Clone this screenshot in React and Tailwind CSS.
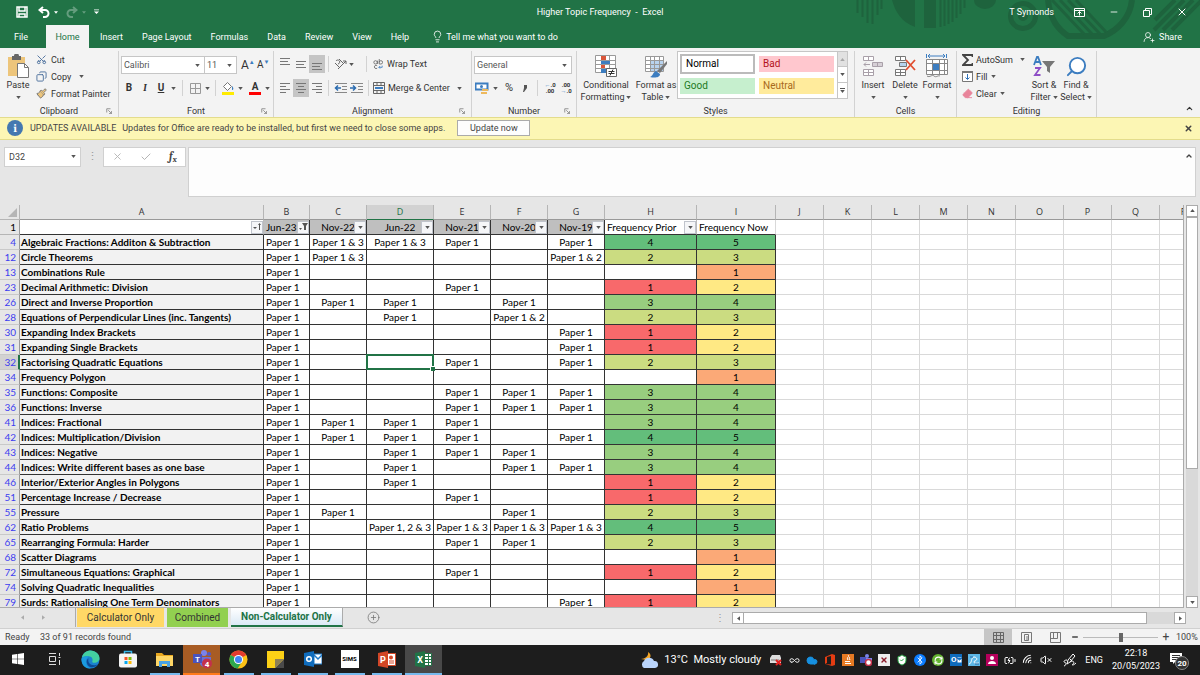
import React, {useState} from 'react';
import clsx from 'clsx';
import {
  BatteryCharging,
  Bluetooth,
  Check,
  ChevronUp,
  CirclePlus,
  Cloud,
  Copy,
  Eraser,
  Infinity as InfinityIcon,
  Lightbulb,
  Minus,
  Paintbrush,
  RefreshCw,
  Scissors,
  Search,
  ShieldCheck,
  UserRoundPlus,
  VolumeX,
  Wifi,
  X,
} from 'lucide-react';

// row number, topic, Nov-22, Jun-22, Nov-21, Nov-20, Nov-19, frequency prior, frequency now
const ROWS = [
  [4, 'Algebraic Fractions: Additon & Subtraction', '1 & 3', '1 & 3', '1', '', '1', 4, 5],
  [12, 'Circle Theorems', '1 & 3', '', '', '', '1 & 2', 2, 3],
  [13, 'Combinations Rule', '', '', '', '', '', null, 1],
  [23, 'Decimal Arithmetic: Division', '', '', '1', '', '', 1, 2],
  [26, 'Direct and Inverse Proportion', '1', '1', '', '1', '', 3, 4],
  [28, 'Equations of Perpendicular Lines (inc. Tangents)', '', '1', '', '1 & 2', '', 2, 3],
  [30, 'Expanding Index Brackets', '', '', '', '', '1', 1, 2],
  [31, 'Expanding Single Brackets', '', '', '', '', '1', 1, 2],
  [32, 'Factorising Quadratic Equations', '', '', '1', '', '1', 2, 3],
  [34, 'Frequency Polygon', '', '', '', '', '', null, 1],
  [35, 'Functions: Composite', '', '', '1', '1', '1', 3, 4],
  [36, 'Functions: Inverse', '', '', '1', '1', '1', 3, 4],
  [41, 'Indices: Fractional', '1', '1', '1', '', '', 3, 4],
  [42, 'Indices: Multiplication/Division', '1', '1', '1', '', '1', 4, 5],
  [43, 'Indices: Negative', '', '1', '1', '1', '', 3, 4],
  [44, 'Indices: Write different bases as one base', '', '1', '', '1', '1', 3, 4],
  [46, 'Interior/Exterior Angles in Polygons', '', '1', '', '', '', 1, 2],
  [51, 'Percentage Increase / Decrease', '', '', '1', '', '', 1, 2],
  [55, 'Pressure', '1', '', '', '1', '', 2, 3],
  [62, 'Ratio Problems', '', '1, 2 & 3', '1 & 3', '1 & 3', '1 & 3', 4, 5],
  [65, 'Rearranging Formula: Harder', '', '', '1', '1', '', 2, 3],
  [68, 'Scatter Diagrams', '', '', '', '', '', null, 1],
  [72, 'Simultaneous Equations: Graphical', '', '', '1', '', '', 1, 2],
  [74, 'Solving Quadratic Inequalities', '', '', '', '', '', null, 1],
  [79, 'Surds: Rationalising One Term Denominators', '', '', '', '', '1', 1, 2],
];

const PRIOR_COLORS = {1: 'bg-[#f8696b]', 2: 'bg-[#cbdc81]', 3: 'bg-[#98ce7f]', 4: 'bg-[#63be7b]'};
const NOW_COLORS = {
  1: 'bg-[#fba977]',
  2: 'bg-[#ffe984]',
  3: 'bg-[#cbdc81]',
  4: 'bg-[#98ce7f]',
  5: 'bg-[#63be7b]',
};

const EMPTY_COLUMNS = ['J', 'K', 'L', 'M', 'N', 'O', 'P', 'Q', 'R'];
const DATES = ['Jun-23', 'Nov-22', 'Jun-22', 'Nov-21', 'Nov-20', 'Nov-19'];

function Caret({className}) {
  return (
    <svg viewBox="0 0 6 4" className={clsx('h-[3px] w-[5px] shrink-0', className)}>
      <path d="M0 0h6L3 4z" fill="#555" />
    </svg>
  );
}

function Launcher() {
  return (
    <svg viewBox="0 0 8 8" className="h-[6px] w-[6px]" fill="none" stroke="#777">
      <path d="M1 6V1h5M3 3l4 4M7.500 4v3.500H4" />
    </svg>
  );
}

function Group({label, launcher, className, children}) {
  return (
    <section className={clsx('flex shrink-0 flex-col border-r border-[#d2d2d2]', className)}>
      <div className="flex h-[54px] items-start">{children}</div>
      <div className="flex h-3 items-center px-1">
        <span className="w-2" />
        <span className="grow text-center">{label}</span>
        <button aria-label={`${label} settings`} className="w-2">
          {launcher && <Launcher />}
        </button>
      </div>
    </section>
  );
}

function IconButton({label, active, children, className}) {
  return (
    <button
      aria-label={label}
      className={clsx('flex h-[18px] w-4 shrink-0 items-center justify-center', active && 'bg-[#c5c5c5]', className)}
    >
      {children}
    </button>
  );
}

function Divider() {
  return <span className="h-4 w-px shrink-0 bg-[#d2d2d2]" />;
}

function Lines({widths, align = 'start', offset = 3}) {
  const x = {start: () => 1, center: (w) => 6 - w / 2, end: (w) => 11 - w};

  return (
    <svg viewBox="0 0 12 14" className="h-[14px] w-3" stroke="#777">
      {widths.map((w, i) => (
        <path key={i} d={`M${x[align](w)} ${offset + i * 3 - 0.5}h${w}`} />
      ))}
    </svg>
  );
}

function IndentIcon({flip}) {
  return (
    <svg viewBox="0 0 14 12" className="h-3 w-[14px]" fill="none" stroke="#888">
      <path d="M1 1.500h12M8 4.500h5M8 7.500h5M1 10.500h12" />
      <path d={flip ? 'M0 6h5M3 3.500L5.500 6 3 8.500' : 'M7 6H2M4 3.500L1.500 6 4 8.500'} stroke="#2b6cb0" strokeWidth="1.500" />
    </svg>
  );
}

function SelectBox({label, value, className}) {
  return (
    <div className={clsx('flex h-[18px] items-center border border-[#c6c6c6] bg-white pr-1', className)}>
      <select
        aria-label={label}
        className="w-0 grow appearance-none bg-transparent pl-[2px] text-[#555] outline-none"
        defaultValue={value}
      >
        <option>{value}</option>
      </select>
      <Caret />
    </div>
  );
}

function BigButton({icon, lines, caretBelow, className}) {
  return (
    <button className={clsx('flex shrink-0 flex-col items-center', className)}>
      <span className="flex h-[26px] items-center">{icon}</span>
      <span className="h-3 whitespace-nowrap">{lines[0]}</span>
      <span className="flex h-3 items-center gap-[2px] whitespace-nowrap">
        {lines[1]}
        <Caret className={caretBelow && 'mt-[1px]'} />
      </span>
    </button>
  );
}

function CellsIcon({kind}) {
  const c = kind === 'insert' ? '#a9a0a9' : '#777';

  return (
    <svg viewBox="0 0 22 22" className="h-[22px] w-[22px]" fill="#fff" stroke={c}>
      <path d="M1.500 1.500h10v4h-10zM6.500 1.500v4M1.500 14.500h10v6h-10zM6.500 14.500v6M1.500 17.500h10" />
      {kind === 'insert' ? (
        <>
          <path d="M10.500 7.500h10v4h-10zM15.500 7.500v4" fill="#d6d0d6" />
          <path d="M8 9.500H2M4 7.500l-2 2 2 2" fill="none" />
        </>
      ) : (
        <>
          <path d="M5.500 7.500h7v4h-7z" fill="#b5d3ee" />
          <path d="M12 5l9 10M21 5l-9 10" stroke="#e04e2f" strokeWidth="1.800" fill="none" />
        </>
      )}
    </svg>
  );
}

function FormatIcon() {
  return (
    <svg viewBox="0 0 22 24" className="h-6 w-[22px]" fill="#fff" stroke="#888">
      <path d="M.5 5.500h21v15H.5zM6.500 5.500v15M13.500 5.500v15M18.500 5.500v15M.5 9.500h21M.5 16.500h21" />
      <path d="M6.500 9.500h7v7h-7z" fill="#3c7dc0" />
      <path d="M2 2h17M4 0L2 2l2 2M17 0l2 2-2 2M.5 0v4M20.500 0v4" stroke="#3c7dc0" fill="none" />
      <path d="M1 22c3 2 5-2 7 0s4-1 6 0" fill="none" />
    </svg>
  );
}

function ConditionalIcon() {
  return (
    <svg viewBox="0 0 22 22" className="h-[22px] w-[22px]" fill="#fff" stroke="#999">
      <path d="M.5.500h20v17H.5zM6.500.500v17M14.500.500v17M.5 5.500h20M.5 9.500h20M.5 13.500h20" />
      <path d="M6 1h5v4H6zM6 10h4v3H6z" fill="#d9563a" stroke="none" />
      <path d="M6 6h9v3H6zM6 14h5v4H6z" fill="#3c7dc0" stroke="none" />
      <path d="M11.500 13.500h10v8h-10z" stroke="#666" />
      <path d="M13.500 16.500h6M13.500 18.500h6M18 14.500l-3 6" stroke="#333" />
    </svg>
  );
}

function TableIcon() {
  return (
    <svg viewBox="0 0 23 23" className="h-[23px] w-[23px]" fill="#fff" stroke="#999">
      <path d="M.5 1.500h18v15H.5z" />
      <path d="M5 5h13v11H5z" fill="#b8d3ee" stroke="none" />
      <path d="M.5 5.500h18M.5 9.500h18M.5 13.500h18M5.500 1.500v15M9.500 1.500v15M14.500 1.500v15" />
      <path d="M22 6v3l-7 9-3-2z" fill="#777" stroke="none" />
      <path d="M11 16l4 3c0 4-6 4-10 3 3-1 3-5 6-6z" fill="#3c7dc0" stroke="none" />
    </svg>
  );
}

function PasteIcon() {
  return (
    <svg viewBox="0 0 22 24" className="h-6 w-[22px]">
      <path d="M1 3h17v19H1z" fill="#edc57b" />
      <path d="M5 2h2a2.500 2.500 0 0 1 5 0h2v4H5z" fill="#666" />
      <path d="M10.500 9.500h7l4 4v10h-11z" fill="#fff" stroke="#777" />
      <path d="M17.500 9.500v4h4" fill="none" stroke="#777" />
    </svg>
  );
}

function TitleBar() {
  return (
    <div className="flex h-6 items-center">
      <div className="flex w-1/3 items-center pl-4 text-white">
        <button aria-label="Save" className="mr-[10px]">
          <svg viewBox="0 0 12 12" className="h-3 w-3" fill="none" stroke="#fff" strokeWidth="1.500">
            <path d="M1 1h10v10H1zM3 1v4h6V1M3 11V8h6v3" />
          </svg>
        </button>
        <button aria-label="Undo" className="mr-1">
          <svg viewBox="0 0 12 12" className="h-3 w-3" fill="none" stroke="#fff" strokeWidth="2">
            <path d="M5 1L1.500 4 5 7M2 4h5a3 3 0 0 1 0 7H5" />
          </svg>
        </button>
        <svg viewBox="0 0 6 4" className="mr-2 h-[3px] w-[4px]">
          <path d="M0 0h6L3 4z" fill="#fff" />
        </svg>
        <button aria-label="Redo" className="mr-1 opacity-30">
          <svg viewBox="0 0 12 12" className="h-3 w-3" fill="none" stroke="#fff" strokeWidth="2">
            <path d="M7 1l3.500 3L7 7M10 4H5a3 3 0 0 0 0 7h2" />
          </svg>
        </button>
        <svg viewBox="0 0 6 4" className="mr-2 h-[3px] w-[4px] opacity-30">
          <path d="M0 0h6L3 4z" fill="#fff" />
        </svg>
        <button aria-label="Customise toolbar">
          <svg viewBox="0 0 6 6" className="h-[6px] w-[5px]" fill="#fff">
            <path d="M0 0h6v1H0zM0 2.500h6l-3 3z" />
          </svg>
        </button>
      </div>
      <h1 className="w-1/3 text-center whitespace-pre text-white">Higher Topic Frequency  -  Excel</h1>
      <div className="flex w-1/3 items-center justify-end gap-6 pr-3 text-white">
        <span className="-mr-1">T Symonds</span>
        <button aria-label="Ribbon display options">
          <svg viewBox="0 0 11 9" className="h-[9px] w-[11px]" fill="none" stroke="#fff">
            <path d="M.5.500h10v8H.5zM.5 2.500h10M5.500 7.500v-4M3.500 5.500l2-2 2 2" />
          </svg>
        </button>
        <button aria-label="Minimise">
          <Minus size={10} />
        </button>
        <button aria-label="Restore">
          <svg viewBox="0 0 9 9" className="h-[9px] w-[9px]" fill="none" stroke="#fff">
            <path d="M.5 2.500h6v6h-6zM2.500 2.500v-2h6v6h-2" />
          </svg>
        </button>
        <button aria-label="Close">
          <X size={12} strokeWidth={2} />
        </button>
      </div>
    </div>
  );
}

// Circuit-like artwork behind the right side of the title bar
function HeaderArt() {
  return (
    <svg viewBox="0 0 350 48" className="absolute top-0 right-0 h-12 w-[350px]" fill="none" stroke="#1e633d">
      <path d="M7.500 0v13M12.500 0v17M17.500 0v23M22.500 0v24M27.500 0v15M31.500 0v9" strokeWidth="2" />
      <path d="M42 0c3 11 9 22 23 27V0zM74 0h12v28H74z" fill="#1e633d" stroke="none" />
      <path d="M90.500 0v27M94.500 0v26M98.500 0v24M102.500 0v22M106.500 0v18M110.500 0v14M114.500 0v8" strokeWidth="2" />
      <path d="M124 0a11 9 0 0 0 22 0z" fill="#1e633d" stroke="none" />
      <circle cx="173" cy="16" r="12.500" strokeWidth="5" />
      <circle cx="173" cy="16" r="5" fill="#1e633d" stroke="none" />
      <path d="M198 0c2 20 10 29 20 36h36c14-6 26-18 28-36" strokeWidth="6" />
      <path d="M202 0l32 34M210 0l32 34M218 0l32 34M226 0l30 32" strokeWidth="3" />
      <path d="M334 0l-30 30M343 0l-30 30M352 0l-30 30M325 0l-20 20" strokeWidth="4" />
    </svg>
  );
}

const TABS = ['Insert', 'Page Layout', 'Formulas', 'Data', 'Review', 'View', 'Help'];

function Header() {
  return (
    <header className="relative bg-[#217346] text-white">
      <HeaderArt />
      <div className="relative">
        <TitleBar />
        <nav className="flex h-6 items-stretch pt-[1px]">
          <button className="w-[46px] pr-1">File</button>
          <button className="w-[43px] bg-[#f3f3f3] text-[#217346]">Home</button>
          <div className="flex gap-[19px] pl-[11px]">
            {TABS.map((tab) => (
              <button key={tab}>{tab}</button>
            ))}
          </div>
          <button className="flex items-center gap-[2px] pl-[22px]">
            <Lightbulb size={13} strokeWidth={1.5} />
            Tell me what you want to do
          </button>
          <button className="ml-auto flex items-center gap-1 pr-[18px]">
            <UserRoundPlus size={12} strokeWidth={1.5} />
            Share
          </button>
        </nav>
      </div>
    </header>
  );
}

function Ribbon() {
  return (
    <div className="flex h-[69px] bg-[#f3f3f3] pt-[3px] text-[#333]">
      <Group label="Clipboard" launcher className="w-[119px]">
        <BigButton icon={<PasteIcon />} lines={['Paste']} caretBelow className="w-9 pt-[2px]" />
        <div className="flex flex-col">
          <button className="flex h-[17px] items-center gap-1">
            <Scissors size={11} strokeWidth={2} className="-rotate-90 text-[#4a6f9c]" />
            Cut
          </button>
          <button className="flex h-[17px] items-center gap-1">
            <Copy size={11} strokeWidth={2} className="-scale-x-100 text-[#4a6f9c]" />
            Copy
            <Caret className="ml-1" />
          </button>
          <button className="flex h-[17px] items-center gap-1 whitespace-nowrap">
            <Paintbrush size={11} className="fill-[#edc57b] text-[#777]" />
            Format Painter
          </button>
        </div>
      </Group>

      <Group label="Font" launcher className="w-[155px]">
        <div className="flex flex-col gap-[5px] pt-[5px] pl-[2px]">
          <div className="flex items-center">
            <SelectBox label="Font" value="Calibri" className="w-[84px]" />
            <SelectBox label="Font size" value="11" className="w-8 border-l-0" />
            <button aria-label="Increase font size" className="ml-1 flex w-4 text-xs leading-3">
              A<span className="text-[6px] leading-[6px] text-[#3c7dc0]">▲</span>
            </button>
            <button aria-label="Decrease font size" className="flex w-4 text-[10px] leading-3">
              A<span className="text-[6px] leading-[6px] text-[#3c7dc0]">▼</span>
            </button>
          </div>
          <div className="flex h-[18px] items-center text-[10px]">
            <IconButton label="Bold">
              <b>B</b>
            </IconButton>
            <IconButton label="Italic">
              <i className="font-serif font-bold">I</i>
            </IconButton>
            <IconButton label="Underline">
              <b className="underline">U</b>
            </IconButton>
            <Caret className="mr-[6px] ml-[2px]" />
            <Divider />
            <IconButton label="Borders" className="ml-[2px] !w-5">
              <svg viewBox="0 0 11 11" className="h-[11px] w-[11px]" fill="none" stroke="#999">
                <path d="M.5.500h10v10H.5zM5.500.500v10M.5 5.500h10" />
              </svg>
            </IconButton>
            <Caret className="mr-[5px]" />
            <Divider />
            <IconButton label="Fill colour" className="ml-1">
              <svg viewBox="0 0 14 14" className="h-[14px] w-[14px]">
                <path d="M2.500 5.500l4-4 4 4-4 4z" fill="#fff" stroke="#777" />
                <path d="M11 5c2 2 1.500 4 0 4z" fill="#3c7dc0" />
                <path d="M1 11h12v3H1z" fill="#ffeb00" />
              </svg>
            </IconButton>
            <Caret className="mr-1 ml-[2px]" />
            <IconButton label="Font colour">
              <span className="w-3 border-b-[3px] border-[#f00] text-center leading-[10px] font-bold">A</span>
            </IconButton>
            <Caret className="ml-[2px]" />
          </div>
        </div>
      </Group>

      <Group label="Alignment" launcher className="w-[198px]">
        <div className="flex flex-col gap-[6px] pt-1 pl-[3px]">
          <div className="flex h-[18px] items-center">
            <IconButton label="Top align">
              <Lines widths={[10, 8, 10]} offset={2} />
            </IconButton>
            <IconButton label="Middle align">
              <Lines widths={[10, 8, 10]} offset={5} />
            </IconButton>
            <IconButton label="Bottom align" active>
              <Lines widths={[10, 8, 10]} offset={7} />
            </IconButton>
            <span className="w-[3px]" />
            <Divider />
            <IconButton label="Orientation" className="ml-1">
              <svg viewBox="0 0 14 12" className="h-3 w-[14px]" fill="none" stroke="#666">
                <path d="M4 11l8-8M12 6V3H9M1 5l4 4M2 3a2 2 0 1 1 2 3M5 1l4 4" />
              </svg>
            </IconButton>
            <Caret className="mr-3" />
            <Divider />
            <button className="ml-[6px] flex items-center gap-1 whitespace-nowrap">
              <svg viewBox="0 0 12 12" className="h-3 w-[10px]" fill="none" stroke="#666">
                <circle cx="3" cy="4" r="2" />
                <path d="M5.500 2v4M7.500 0v6M7.500 4a2 2 0 1 1 2 2h-2M5 8a2 2 0 1 0 0 3" />
                <path d="M11 8v2H7M8.500 8.500L7 10l1.500 1.500" stroke="#3c7dc0" />
              </svg>
              Wrap Text
            </button>
          </div>
          <div className="flex h-[18px] items-center">
            <IconButton label="Align left">
              <Lines widths={[10, 6, 10, 6]} />
            </IconButton>
            <IconButton label="Centre" active>
              <Lines widths={[10, 6, 10, 6]} align="center" />
            </IconButton>
            <IconButton label="Align right">
              <Lines widths={[10, 6, 10, 6]} align="end" />
            </IconButton>
            <span className="w-[3px]" />
            <Divider />
            <IconButton label="Decrease indent" className="ml-1">
              <IndentIcon />
            </IconButton>
            <IconButton label="Increase indent">
              <IndentIcon flip />
            </IconButton>
            <span className="w-[3px]" />
            <Divider />
            <button className="ml-1 flex items-center gap-[3px] whitespace-nowrap">
              <svg viewBox="0 0 12 12" className="h-3 w-3" fill="none" stroke="#666">
                <path d="M.5.500h11v11H.5zM.5 3.500h11M.5 8.500h11M4 .500v3M8 .500v3M4 8.500v3M8 8.500v3" />
                <path d="M2 6h8" stroke="#3c7dc0" strokeWidth="2" />
              </svg>
              Merge &amp; Center
              <Caret className="ml-1" />
            </button>
          </div>
        </div>
      </Group>

      <Group label="Number" launcher className="w-[105px]">
        <div className="flex flex-col gap-[5px] pt-[5px] pl-[2px]">
          <SelectBox label="Number format" value="General" className="w-[98px]" />
          <div className="flex h-[18px] items-center text-[11px]">
            <IconButton label="Accounting format">
              <svg viewBox="0 0 14 13" className="h-[13px] w-[14px]">
                <path d="M.5 1.500h12v6H.5z" fill="#fff" stroke="#3c7dc0" strokeWidth="2" />
                <circle cx="6.500" cy="4.500" r="1.500" fill="#3c7dc0" />
                <path d="M7 7h6v2H7zM6 10h6v2H6z" fill="#edb95e" />
              </svg>
            </IconButton>
            <Caret className="mx-[3px]" />
            <IconButton label="Percent">%</IconButton>
            <IconButton label="Comma">
              <svg viewBox="0 0 4 7" className="h-[7px] w-1" fill="#555">
                <path d="M1 0h3v3L1 7H0l1-4z" />
              </svg>
            </IconButton>
            <span className="w-1" />
            <Divider />
            <button aria-label="Increase decimal" className="ml-1 w-4 text-[6px] leading-[6px] font-bold">
              <span className="text-[#3c7dc0]">←</span>.0
              <br />
              .00
            </button>
            <button aria-label="Decrease decimal" className="w-4 text-[6px] leading-[6px] font-bold">
              .00
              <br />
              <span className="text-[#3c7dc0]">→</span>.0
            </button>
          </div>
        </div>
      </Group>

      <Group label="Styles" className="w-[278px]">
        <BigButton icon={<ConditionalIcon />} lines={['Conditional', 'Formatting']} className="w-[58px] pt-[2px]" />
        <BigButton icon={<TableIcon />} lines={['Format as', 'Table']} className="w-[42px] pt-[2px]" />
        <div className="flex h-12 w-[171px] border border-[#c6c6c6] bg-white">
          <div className="grid grow grid-cols-2 grid-rows-2 gap-x-1 gap-y-[2px] p-[2px] pr-[3px] text-left text-[10px]">
            <button className="border-2 border-[#bbb] pl-1 text-left text-black">Normal</button>
            <button className="my-[2px] bg-[#ffc7ce] pl-1 text-left text-[#b3131c]">Bad</button>
            <button className="my-[2px] bg-[#c6efce] pl-1 text-left text-[#1d7a1f]">Good</button>
            <button className="my-[2px] bg-[#ffeb9c] pl-1 text-left text-[#a8691b]">Neutral</button>
          </div>
          <div className="grid w-[10px] grid-rows-3 divide-y divide-[#c6c6c6] border-l border-[#c6c6c6]">
            <button aria-label="Previous styles" className="flex items-center justify-center bg-[#e1e1e1]">
              <Caret className="rotate-180 opacity-40" />
            </button>
            <button aria-label="Next styles" className="flex items-center justify-center">
              <Caret />
            </button>
            <button aria-label="More styles" className="flex flex-col items-center justify-center gap-[1px]">
              <span className="h-px w-[5px] bg-[#555]" />
              <Caret />
            </button>
          </div>
        </div>
      </Group>

      <Group label="Cells" className="w-[102px]">
        <BigButton icon={<CellsIcon kind="insert" />} lines={['Insert']} caretBelow className="w-9 pt-[2px]" />
        <BigButton icon={<CellsIcon kind="delete" />} lines={['Delete']} caretBelow className="w-7 pt-[2px]" />
        <BigButton icon={<FormatIcon />} lines={['Format']} caretBelow className="w-9 pt-[2px]" />
      </Group>

      <Group label="Editing" className="w-[140px]">
        <div className="flex w-[71px] flex-col pl-[5px]">
          <button className="flex h-[17px] items-center gap-[3px]">
            <svg viewBox="0 0 11 12" className="h-3 w-[11px]" fill="none" stroke="#444" strokeWidth="1.800">
              <path d="M10.500 3V1H1l5 5-5 5h9.500V9" />
            </svg>
            AutoSum
            <Caret className="ml-1" />
          </button>
          <button className="flex h-[17px] items-center gap-[3px]">
            <svg viewBox="0 0 11 11" className="h-[11px] w-[11px]" fill="#fff" stroke="#777">
              <path d="M.5.500h10v10H.5z" />
              <path d="M0 1h11" strokeWidth="2" />
              <path d="M5.500 3v5M3.500 6.500l2 2 2-2" fill="none" stroke="#2f71b8" />
            </svg>
            Fill
            <Caret />
          </button>
          <button className="flex h-[17px] items-center gap-[3px]">
            <Eraser size={11} className="fill-[#e8849a] text-[#e8849a]" />
            Clear
            <Caret />
          </button>
        </div>
        <BigButton
          className="w-8 pt-[2px]"
          lines={['Sort &', 'Filter']}
          icon={
            <svg viewBox="0 0 22 20" className="h-5 w-[22px]" fill="none" strokeWidth="1.800">
              <path d="M1 9l3-8h1l3 8M2 6h5" stroke="#3c7dc0" />
              <path d="M2 12h5l-5 7h5.500" stroke="#8e4ec6" />
              <path d="M9 5h13l-5 6v6l-3-2v-4z" fill="#777" />
            </svg>
          }
        />
        <BigButton
          className="w-8 pt-[2px]"
          lines={['Find &', 'Select']}
          icon={<Search size={23} strokeWidth={2} className="-scale-x-100 fill-white text-[#3c7dc0]" />}
        />
      </Group>
      <button aria-label="Collapse ribbon" className="ml-auto self-end pr-[6px] pb-1">
        <ChevronUp size={9} strokeWidth={3} />
      </button>
    </div>
  );
}

function UpdateBar({onClose}) {
  return (
    <div className="flex h-[23px] items-center border-y border-[#e3dc8c] bg-[#fcf6b4] px-[7px] text-[#444]">
      <span className="mr-[7px] flex h-4 w-4 items-center justify-center rounded-full bg-[#4478b0] font-serif text-xs font-bold text-white">
        i
      </span>
      <strong className="mr-[6px] font-normal">UPDATES AVAILABLE</strong>
      <span>Updates for Office are ready to be installed, but first we need to close some apps.</span>
      <button className="ml-3 h-4 w-[73px] border border-[#ababab] bg-[#fdfdfd]">Update now</button>
      <button aria-label="Dismiss" className="ml-auto" onClick={onClose}>
        <X size={9} strokeWidth={4} />
      </button>
    </div>
  );
}

function FormulaBar() {
  return (
    <div className="flex h-[65px] items-start bg-[#e6e6e6] px-1 pt-[7px] text-[#444]">
      <div className="flex h-5 w-[77px] items-center border border-[#d0d0d0] bg-white pr-1">
        <input aria-label="Name box" defaultValue="D32" className="w-0 grow pl-1 outline-none" />
        <Caret />
      </div>
      <span className="w-[22px] text-center text-[11px] leading-[20px] text-[#999]">⋮</span>
      <div className="flex h-5 w-[83px] items-center justify-around border border-[#d0d0d0] bg-white">
        <button aria-label="Cancel">
          <X size={11} className="text-[#b5b5b5]" />
        </button>
        <button aria-label="Enter">
          <Check size={12} className="text-[#b5b5b5]" />
        </button>
        <button aria-label="Insert function" className="font-serif text-[11px] font-bold italic">
          f<sub>x</sub>
        </button>
      </div>
      <div className="ml-[2px] flex h-[50px] grow border border-[#d0d0d0] bg-[#fdfdfd]">
        <textarea aria-label="Formula" className="grow resize-none bg-transparent outline-none" />
        <button aria-label="Collapse formula bar" className="self-start pt-1 pr-[2px]">
          <ChevronUp size={8} strokeWidth={4} />
        </button>
      </div>
    </div>
  );
}

function FilterButton({label, children}) {
  return (
    <button
      aria-label={label}
      className="absolute right-0 bottom-0 flex h-[13px] w-3 items-center justify-center border border-[#c0c4cc] bg-[#f5f6f8]"
    >
      {children || <Caret />}
    </button>
  );
}

const HEAD = 'h-[15px] overflow-hidden border-r border-b p-0 text-center font-normal';
const CELL = 'h-[15px] border-r border-b border-[#333] p-0 text-center';
const BLANK = 'h-[15px] border-r border-b border-[#d9d9d9] bg-white p-0';

function Row({row}) {
  const [number, topic, ...rest] = row;
  const papers = rest.slice(0, 5);
  const [prior, now] = rest.slice(5);
  const selected = number === 32;

  return (
    <tr>
      <th
        className={clsx(
          'h-[15px] border-b border-[#c9c9c9] p-0 text-right font-normal text-[#3d3df0]',
          selected
            ? 'border-r-2 border-r-[#217346] bg-[#d2d2d2] pr-[2px]'
            : 'border-r border-r-[#999] bg-[#e6e6e6] pr-[3px]',
        )}
      >
        {number}
      </th>
      <td className={clsx(CELL, 'bg-[#f2f2f2] !text-left font-bold')}>
        <span className="pl-[1px]">{topic}</span>
      </td>
      <td className={CELL}>
        <span className="block pl-[2px] text-left">Paper 1</span>
      </td>
      {papers.map((paper, i) => (
        <td key={i} className={clsx(CELL, selected && i === 1 && 'relative')}>
          {paper && `Paper ${paper}`}
          {selected && i === 1 && (
            <span className="absolute -inset-[1px] border-2 border-[#217346]">
              <span className="absolute -right-[3px] -bottom-[3px] h-[5px] w-[5px] border-t border-l border-white bg-[#217346]" />
            </span>
          )}
        </td>
      ))}
      <td className={clsx(CELL, PRIOR_COLORS[prior])}>{prior}</td>
      <td className={clsx(CELL, NOW_COLORS[now])}>{now}</td>
      {EMPTY_COLUMNS.map((column) => (
        <td key={column} className={BLANK} />
      ))}
    </tr>
  );
}

function Sheet() {
  return (
    <div className="flex min-h-0 grow bg-[#e6e6e6]">
      <div className="w-0 grow overflow-hidden border-r border-b border-[#ababab]">
        <table className="w-[1208px] min-w-full table-fixed border-separate border-spacing-0 bg-white font-['Lato',sans-serif] text-[10px] leading-[14px] whitespace-nowrap text-black">
          <colgroup>
            <col className="w-5" />
            <col className="w-[244px]" />
            <col className="w-[46px]" />
            <col className="w-[57px]" />
            <col className="w-[67px]" />
            <col className="w-[57px]" />
            <col className="w-[57px]" />
            <col className="w-[57px]" />
            <col className="w-[92px]" />
            <col className="w-[79px]" />
            {EMPTY_COLUMNS.map((column) => (
              <col key={column} className="w-12" />
            ))}
          </colgroup>
          <thead>
            <tr className="bg-[#e6e6e6] font-['Open_Sans',sans-serif] text-[9px] leading-[13px]">
              <th className={clsx(HEAD, 'border-[#b5b5b5]')}>
                <svg viewBox="0 0 9 9" className="mt-[2px] ml-2 h-[9px] w-[9px]">
                  <path d="M9 0v9H0z" fill="#b5b5b5" />
                </svg>
              </th>
              {['A', 'B', 'C', 'D', 'E', 'F', 'G', 'H', 'I', ...EMPTY_COLUMNS].map((column) => (
                <th
                  key={column}
                  className={clsx(
                    HEAD,
                    'border-r-[#b5b5b5] text-[#333]',
                    column === 'D' ? 'border-b-[#217346] bg-[#d2d2d2] !text-[#217346]' : 'border-b-[#999]',
                  )}
                >
                  {column}
                </th>
              ))}
            </tr>
            <tr>
              <th className="h-[15px] border-r border-b border-[#b5b5b5] border-r-[#999] bg-[#e6e6e6] p-0 pr-[3px] text-right font-normal">
                1
              </th>
              <th className={clsx(CELL, 'relative border-r-[#bbb]')}>
                <FilterButton label="Sort topics">
                  <svg viewBox="0 0 9 8" className="h-2 w-[9px]" fill="#555">
                    <path d="M0 4h4L2 6zM6 7V2H5l1.500-2L8 2H7v5z" />
                  </svg>
                </FilterButton>
              </th>
              {DATES.map((date, i) => (
                <th key={date} className={clsx(CELL, 'relative bg-[#bfbfbf] font-normal')}>
                  <span className={clsx('block', i === 0 && 'pl-[2px] text-left')}>{date}</span>
                  <FilterButton label={`Filter ${date}`}>
                    {i === 0 && (
                      <svg viewBox="0 0 9 8" className="h-2 w-[9px]" fill="#555">
                        <path d="M3 0h6L7 3v4H5V3zM0 5h3L1.500 7z" />
                      </svg>
                    )}
                  </FilterButton>
                </th>
              ))}
              <th className={clsx(CELL, 'relative border-r-[#bbb] font-normal')}>
                <span className="block pl-[2px] text-left">Frequency Prior</span>
                <FilterButton label="Filter frequency prior" />
              </th>
              <th className={clsx(CELL, 'border-r-[#d9d9d9] font-normal')}>
                <span className="block pl-[2px] text-left">Frequency Now</span>
              </th>
              {EMPTY_COLUMNS.map((column) => (
                <td key={column} className={BLANK} />
              ))}
            </tr>
          </thead>
          <tbody>
            {ROWS.map((row) => (
              <Row key={row[0]} row={row} />
            ))}
          </tbody>
        </table>
      </div>
      <div className="flex w-4 flex-col items-center px-[2px]">
        <button
          aria-label="Scroll up"
          className="flex h-3 w-full items-center justify-center border border-[#ababab] bg-white"
        >
          <Caret className="rotate-180" />
        </button>
        <div className="h-[252px] w-full border border-[#ababab] bg-white" />
        <div className="w-full grow bg-[#d9d9d9]" />
        <button
          aria-label="Scroll down"
          className="flex h-3 w-full items-center justify-center border border-[#ababab] bg-white"
        >
          <Caret />
        </button>
      </div>
    </div>
  );
}

function SheetTabs() {
  return (
    <div className="flex h-5 shrink-0 items-start bg-[#e6e6e6] text-[10px] text-[#333]">
      <div className="flex h-[19px] w-[76px] items-center gap-4 border-r border-[#ababab] pl-5">
        <Caret className="rotate-90 opacity-40" />
        <Caret className="-rotate-90 opacity-40" />
      </div>
      <button className="ml-[1px] h-[19px] w-[87px] bg-[#ffd866]">Calculator Only</button>
      <button className="mx-[3px] h-[19px] w-[61px] bg-[#92d050]">Combined</button>
      <button className="h-[19px] w-[112px] border-r border-b-2 border-r-[#ababab] border-b-[#217346] bg-gradient-to-b from-white to-[#dbe9f5] font-bold text-[#217346]">
        Non-Calculator Only
      </button>
      <button aria-label="New sheet" className="ml-6 pt-[3px]">
        <CirclePlus size={13} strokeWidth={1.5} className="text-[#777]" />
      </button>
      <span className="ml-auto w-6 self-center text-center text-[#999]">⋮</span>
      <div className="flex h-3 w-[39%] items-stretch self-center pr-[14px]">
        <button
          aria-label="Scroll left"
          className="flex w-3 items-center justify-center border border-[#ababab] bg-white"
        >
          <Caret className="rotate-90" />
        </button>
        <div className="grow border border-l-0 border-[#ababab] bg-white" />
        <div className="w-[27px] bg-[#d9d9d9]" />
        <button
          aria-label="Scroll right"
          className="flex w-3 items-center justify-center border border-[#ababab] bg-white"
        >
          <Caret className="-rotate-90" />
        </button>
      </div>
    </div>
  );
}

function StatusBar() {
  return (
    <div className="flex h-[17px] shrink-0 items-center border-t border-[#d0d0d0] bg-[#f3f3f3] pl-[5px] text-[#444]">
      <span className="w-[35px]">Ready</span>
      <span>33 of 91 records found</span>
      <button aria-label="Normal view" className="ml-auto flex h-4 w-7 items-center justify-center bg-[#c6c6c6]">
        <svg viewBox="0 0 11 11" className="h-[11px] w-[11px]" fill="none" stroke="#666">
          <path d="M.5.500h10v10H.5zM3.500.500v10M7.500.500v10M.5 3.500h10M.5 7.500h10" />
        </svg>
      </button>
      <button aria-label="Page layout view" className="flex h-4 w-[29px] items-center justify-center">
        <svg viewBox="0 0 11 11" className="h-[11px] w-[11px]" fill="none" stroke="#777">
          <path d="M.5.500h10v10H.5zM3.500 2.500h4v6h-4zM5 5h2M5 7h2" />
        </svg>
      </button>
      <button aria-label="Page break view" className="flex h-4 w-7 items-center justify-center">
        <svg viewBox="0 0 11 11" className="h-[11px] w-[11px]" fill="none" stroke="#777">
          <path d="M.5.500h10v10H.5zM.5 6.500h7v-6M3.500.500v6" />
        </svg>
      </button>
      <button aria-label="Zoom out" className="ml-[2px] w-3">
        <Minus size={8} strokeWidth={4} />
      </button>
      <input
        type="range"
        aria-label="Zoom"
        defaultValue="50"
        className="h-3 w-[75px] appearance-none bg-[linear-gradient(#bbb,#bbb)] bg-[length:100%_1px] bg-center bg-no-repeat [&::-webkit-slider-thumb]:h-[9px] [&::-webkit-slider-thumb]:w-1 [&::-webkit-slider-thumb]:appearance-none [&::-webkit-slider-thumb]:bg-[#666]"
      />
      <button aria-label="Zoom in" className="w-4 text-center text-xs leading-3">
        +
      </button>
      <span className="w-[26px] pl-[2px]">100%</span>
    </div>
  );
}

function Task({label, running, className, children}) {
  return (
    <button aria-label={label} className={clsx('flex h-full w-[37px] flex-col items-center', className)}>
      <span className="flex grow items-center">{children}</span>
      <span className={clsx('h-[2px] w-[30px]', running && 'bg-[#76b9ed]')} />
    </button>
  );
}

function TaskButtons() {
  return (
    <div className="flex h-full">
      <Task label="Start" className="!w-9">
        <svg viewBox="0 0 12 12" className="h-3 w-3" fill="#fff">
          <path d="M0 1.700l5-.7v4.700H0zM5.600.900L12 0v5.700H5.600zM0 6.300h5V11l-5-.7zM5.600 6.300H12V12l-6.400-.9z" />
        </svg>
      </Task>
      <Task label="Task view" className="!w-9">
        <svg viewBox="0 0 13 12" className="h-3 w-[13px]" fill="none" stroke="#ddd">
          <path d="M1 .500h7M1.500 3.500h6v5h-6zM1 11.500h7M11.500 0v3M11.500 7v5M10.500 4.500h2" />
        </svg>
      </Task>
      <Task label="Edge">
        <svg viewBox="0 0 20 20" className="h-[19px] w-[19px]">
          <circle cx="10" cy="10" r="9.500" fill="#1b82cf" />
          <path
            d="M1 8C2 3 6 .5 10 .5c5.500 0 9.500 4 9.500 8 0 3-2.500 5-5.500 5-2 0-2.500-1-2-2 .8-2-.5-5-4-5C5 6.500 2 7 1 8z"
            fill="#43cfa0"
          />
          <path d="M8 7c-4 2-4 9 2 12.500C3 20 0 14 .6 9 2 7 6 6 8 7z" fill="#1b9be0" />
          <path d="M8 9c-2 5 4 9 10 6-4 5-12 4-12-3 0-1 1-3 2-3z" fill="#0c4a96" />
        </svg>
      </Task>
      <Task label="Microsoft Store">
        <svg viewBox="0 0 18 18" className="h-[18px] w-[18px]">
          <path d="M5.500 5V1.500h7V5" fill="none" stroke="#35b5e8" strokeWidth="1.500" />
          <rect y="3.500" width="18" height="14" rx="2" fill="#f4f4f4" />
          <path d="M5.500 7h3v3h-3z" fill="#f35325" />
          <path d="M9.500 7h3v3h-3z" fill="#81bc06" />
          <path d="M5.500 11h3v3h-3z" fill="#05a6f0" />
          <path d="M9.500 11h3v3h-3z" fill="#ffba08" />
        </svg>
      </Task>
      <Task label="File Explorer" running>
        <svg viewBox="0 0 17 15" className="h-[15px] w-[17px]">
          <path d="M0 1h6l2 2h9v11H0z" fill="#e9a820" />
          <path d="M0 4h17v10H0z" fill="#ffd766" />
          <path d="M3 9h11v6h-3v-3H6v3H3z" fill="#4ba3e3" />
        </svg>
      </Task>
      <Task label="Teams" className="bg-[#a85c24] [&>span:last-child]:w-full [&>span:last-child]:bg-[#ff7a1a]">
        <svg viewBox="0 0 20 20" className="h-5 w-5">
          <circle cx="12" cy="4" r="3" fill="#7b83eb" />
          <circle cx="17" cy="5" r="2" fill="#5059c9" />
          <path d="M8 8h11v7c-2 4-10 4-11 0z" fill="#6870d6" />
          <path d="M1 5h9v9H1z" fill="#4b53bc" />
          <text x="5.500" y="12.500" fontSize="8" fontWeight="700" textAnchor="middle" fill="#fff">
            T
          </text>
          <circle cx="15" cy="14.500" r="5" fill="#c4314b" />
          <text x="15" y="17.500" fontSize="8" fontWeight="700" textAnchor="middle" fill="#fff">
            4
          </text>
        </svg>
      </Task>
      <Task label="Chrome" running>
        <svg viewBox="0 0 20 20" className="h-[19px] w-[19px]">
          <circle cx="10" cy="10" r="9.500" fill="#fbc116" />
          <path d="M10 10L1.800 5.200A9.500 9.500 0 0 1 18.200 5.200z" fill="#e33b2e" />
          <path d="M1.800 5.200A9.500 9.500 0 0 0 9 19.500l5-7.500-4-2z" fill="#2da94f" />
          <circle cx="10" cy="10" r="4.800" fill="#fff" />
          <circle cx="10" cy="10" r="3.700" fill="#4285f4" />
        </svg>
      </Task>
      <Task label="Sticky Notes" running>
        <svg viewBox="0 0 17 17" className="h-[17px] w-[17px]">
          <path d="M0 0h17v17H0z" fill="#fcd116" />
          <path d="M17 8v9H8z" fill="#4a4a4a" />
          <path d="M8 17V8h9z" fill="#8d8056" />
        </svg>
      </Task>
      <Task label="Outlook" running>
        <svg viewBox="0 0 18 16" className="h-4 w-[18px]">
          <path d="M10 3h8v10h-8z" fill="#fff" stroke="#1b78c9" />
          <path d="M10 4l4 4 4-4" fill="none" stroke="#1b78c9" strokeWidth="1.500" />
          <path d="M0 2l10-2v16L0 14z" fill="#0f6cbd" />
          <circle cx="5" cy="8" r="2.300" fill="none" stroke="#fff" strokeWidth="1.500" />
        </svg>
      </Task>
      <Task label="SIMS" running>
        <span className="flex h-[18px] w-[18px] items-center justify-center bg-white text-[6px] font-bold text-black">
          SIMS
        </span>
      </Task>
      <Task label="PowerPoint" running>
        <svg viewBox="0 0 18 17" className="h-[17px] w-[18px]">
          <path d="M9.500 2.500h8v12h-8z" fill="#fff" stroke="#d24726" />
          <path d="M11 10h5M11 12h5" stroke="#d24726" />
          <circle cx="13" cy="6.500" r="2" fill="#d24726" />
          <path d="M0 2l10-2v17L0 15z" fill="#d24726" />
          <text x="5" y="12" fontSize="9" fontWeight="700" textAnchor="middle" fill="#fff">
            P
          </text>
        </svg>
      </Task>
      <Task label="Excel" running className="bg-[#484848] [&>span:last-child]:w-full">
        <svg viewBox="0 0 18 17" className="h-[17px] w-[18px]">
          <path d="M9.500 2.500h7v12h-7z" fill="#fff" stroke="#217346" />
          <path d="M13.500 3v12M10 5.500h6M10 8.500h6M10 11.500h6" stroke="#217346" />
          <path d="M0 2l10-2v17L0 15z" fill="#217346" />
          <text x="5" y="12" fontSize="9" fontWeight="700" textAnchor="middle" fill="#fff">
            X
          </text>
        </svg>
      </Task>
    </div>
  );
}

function TrayIcon({label, className, children}) {
  return (
    <button aria-label={label} className="flex w-[18px] justify-center">
      <span className={clsx('flex h-3 w-3 items-center justify-center', className)}>{children}</span>
    </button>
  );
}

function Taskbar() {
  return (
    <footer className="flex h-[30px] shrink-0 items-center bg-[#1d1d1d] text-white">
      <TaskButtons />
      <button className="ml-auto flex items-center gap-[5px] text-[11px] whitespace-pre">
        <svg viewBox="0 0 20 18" className="h-[18px] w-5">
          <path d="M9 1c4 2 3 7-1 8L2 8c4 0 8-3 7-7z" fill="#f5a524" />
          <path d="M5 17a4 4 0 0 1 0-7 5.500 5.500 0 0 1 10 0 3.500 3.500 0 0 1 1 7z" fill="#b9d4fb" />
        </svg>
        13°C  Mostly cloudy
      </button>
      <div className="ml-[6px] flex items-center">
        <TrayIcon label="Printer">
          <svg viewBox="0 0 12 12" className="h-3 w-3">
            <path d="M2 1h8l1 3v5H0V4z" fill="#ddd" />
            <path d="M1 6h8" stroke="#777" />
            <path d="M6 6l5 5M11 6l-5 5" stroke="#e02020" strokeWidth="2" />
          </svg>
        </TrayIcon>
        <TrayIcon label="Creative Cloud">
          <InfinityIcon size={11} />
        </TrayIcon>
        <TrayIcon label="OneDrive">
          <Cloud size={13} className="fill-[#1690e0] text-[#1690e0]" />
        </TrayIcon>
        <TrayIcon label="Office">
          <svg viewBox="0 0 12 12" className="h-3 w-3" fill="#e43c12">
            <path d="M1 3l7-3 3 1v10l-3 1-7-2 6 .5V2L3 3v6L1 10z" />
          </svg>
        </TrayIcon>
        <TrayIcon label="Java" className="bg-[#e77a23]">
          <svg viewBox="0 0 12 12" className="h-3 w-3" fill="none" stroke="#fff">
            <path d="M6 1c2 2-2 2 0 5M3 7.500h5M3 9.500h6M8 3c-1 1-1 1 0 3" />
          </svg>
        </TrayIcon>
        <TrayIcon label="Teams status">
          <svg viewBox="0 0 12 12" className="h-3 w-3">
            <circle cx="7" cy="2" r="2" fill="#7b83eb" />
            <path d="M0 3h6v6H0z" fill="#4b53bc" />
            <path d="M6 4h6v5H6z" fill="#7b83eb" />
            <circle cx="8.500" cy="8.500" r="3" fill="#fff" stroke="#c4314b" strokeWidth="1.500" />
          </svg>
        </TrayIcon>
        <TrayIcon label="Blocked" className="bg-[#eee]">
          <X size={8} strokeWidth={4} className="text-[#8b1c2b]" />
        </TrayIcon>
        <TrayIcon label="Security">
          <ShieldCheck size={12} className="fill-white text-[#27a844]" />
        </TrayIcon>
        <TrayIcon label="Bluetooth" className="rounded-full bg-[#0a7cff]">
          <Bluetooth size={10} />
        </TrayIcon>
        <TrayIcon label="Sync" className="rounded-full bg-[#62b22f]">
          <RefreshCw size={9} strokeWidth={3} />
        </TrayIcon>
        <TrayIcon label="Outlook status" className="bg-[#0f6cbd] text-[8px] font-bold">
          O
          <svg viewBox="0 0 5 6" className="h-[6px] w-[5px]" fill="#fff" stroke="#0f6cbd">
            <path d="M0 0h5v6H0zM0 1l2.500 2L5 1" />
          </svg>
        </TrayIcon>
        <TrayIcon label="Remote" className="bg-[#5db7e6]">
          <svg viewBox="0 0 12 12" className="h-3 w-3" fill="none" stroke="#fff">
            <path d="M1 10c3 0 2-7 5-7s4 3 1 4 0 3 4 2" />
            <path d="M2 3h3M7 10h4" stroke="#2268a5" />
          </svg>
        </TrayIcon>
        <TrayIcon label="Account" className="bg-[#b5005b]">
          <svg viewBox="0 0 12 12" className="h-3 w-3" fill="#fff">
            <circle cx="6" cy="4" r="2" />
            <path d="M2 10c0-4 8-4 8 0z" />
          </svg>
        </TrayIcon>
        <TrayIcon label="Battery">
          <BatteryCharging size={13} />
        </TrayIcon>
        <TrayIcon label="Network">
          <Wifi size={12} className="-rotate-45" />
        </TrayIcon>
        <TrayIcon label="Volume">
          <VolumeX size={12} />
        </TrayIcon>
      </div>
      <button aria-label="Pen" className="ml-2">
        <svg viewBox="0 0 14 14" className="h-[14px] w-[14px]" fill="none" stroke="#fff">
          <path d="M4 11l1-4 5-6 2 2-5 6zM7 6l2 2" />
          <path d="M4 7C1 7 0 9 2 9.500s1 3-1 3.500M7 9c3-2 5 0 3 2s1 1 3-1" />
        </svg>
      </button>
      <span className="pr-1 pl-2">ENG</span>
      <div className="w-[58px] text-center leading-[13px]">
        <div>22:18</div>
        <div>20/05/2023</div>
      </div>
      <button aria-label="20 notifications" className="relative mr-[11px] ml-1 h-5 w-5">
        <svg viewBox="0 0 20 20" className="h-5 w-5">
          <path d="M1 3h12v9H6l-2 2v-2H1z" fill="#fff" />
          <path d="M3 5.500h8M3 7.500h8M3 9.500h5" stroke="#333" />
          <circle cx="13" cy="13" r="6.500" fill="#333" stroke="#888" />
          <text x="13" y="16" fontSize="8" fontWeight="700" textAnchor="middle" fill="#fff">
            20
          </text>
        </svg>
      </button>
    </footer>
  );
}

/**
 * Spreadsheet window with its ribbon, a filtered topic table and the desktop taskbar.
 *
 * @return {JSX.Element} The application window
 */
export default function App() {
  const [showUpdate, setShowUpdate] = useState(true);

  return (
    <div className="flex h-screen flex-col overflow-hidden bg-[#e6e6e6] font-['Roboto','Open_Sans',sans-serif] text-[9px] leading-3">
      <Header />
      <Ribbon />
      {showUpdate && <UpdateBar onClose={() => setShowUpdate(false)} />}
      <FormulaBar />
      <Sheet />
      <SheetTabs />
      <StatusBar />
      <Taskbar />
    </div>
  );
}
